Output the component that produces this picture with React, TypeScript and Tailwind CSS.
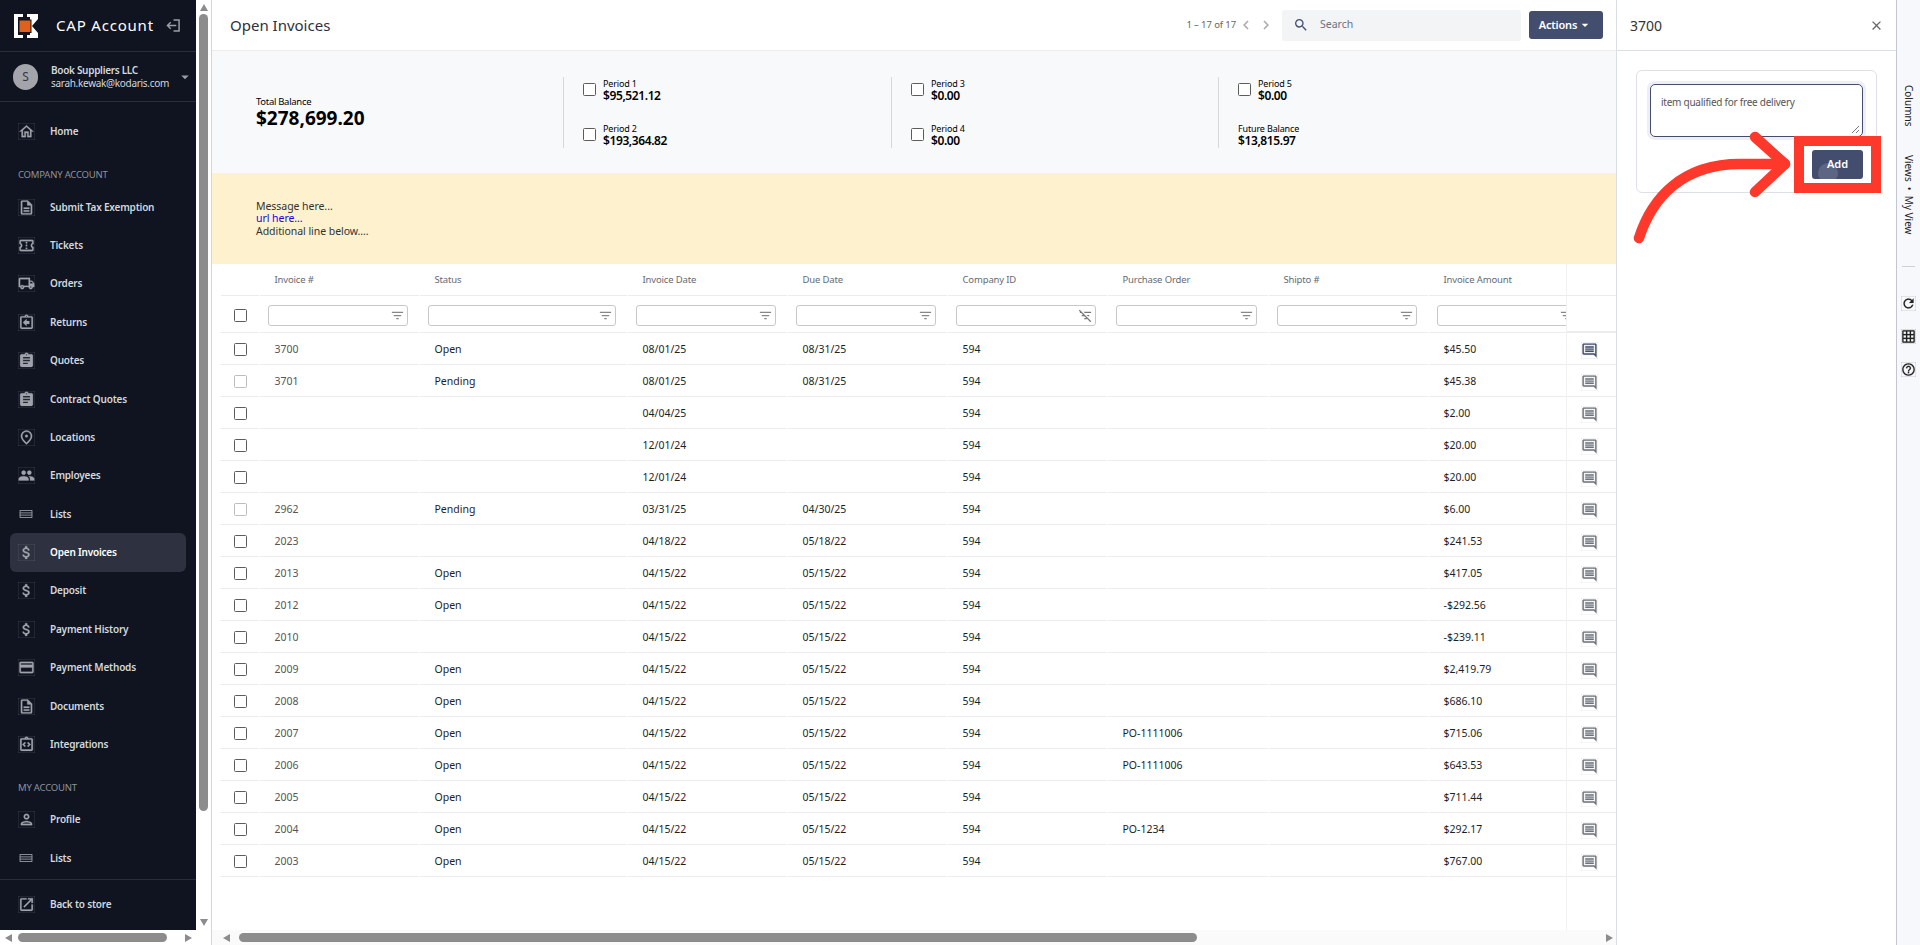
import React from "react";
import {
  MdAssignment,
  MdAttachMoney,
  MdClose,
  MdHelpOutline,
  MdOutlineAssignmentReturn,
  MdOutlineChevronLeft,
  MdOutlineChevronRight,
  MdOutlineComment,
  MdOutlineConfirmationNumber,
  MdOutlineCreditCard,
  MdOutlineDescription,
  MdOutlineHome,
  MdOutlineIntegrationInstructions,
  MdOutlineLocalShipping,
  MdOutlinePerson,
  MdOutlinePlace,
  MdOpenInNew,
  MdPeople,
  MdRefresh,
  MdSearch,
  MdFilterList,
  MdFilterListOff,
  MdArrowDropDown,
  MdOutlineGridOn,
} from "react-icons/md";

const ListsIcon = ({ className }: { className?: string }) => (
  <svg viewBox="0 0 16 10" className={className} fill="none" stroke="currentColor" strokeWidth="1.2">
    <rect x="0.6" y="0.6" width="14.8" height="8.8" />
    <path d="M0 3.6h16M0 6.4h16" />
  </svg>
);

const companyItems = [
  { label: "Submit Tax Exemption", Icon: MdOutlineDescription },
  { label: "Tickets", Icon: MdOutlineConfirmationNumber },
  { label: "Orders", Icon: MdOutlineLocalShipping },
  { label: "Returns", Icon: MdOutlineAssignmentReturn },
  { label: "Quotes", Icon: MdAssignment },
  { label: "Contract Quotes", Icon: MdAssignment },
  { label: "Locations", Icon: MdOutlinePlace },
  { label: "Employees", Icon: MdPeople },
  { label: "Lists", Icon: ListsIcon },
  { label: "Open Invoices", Icon: MdAttachMoney, active: true },
  { label: "Deposit", Icon: MdAttachMoney },
  { label: "Payment History", Icon: MdAttachMoney },
  { label: "Payment Methods", Icon: MdOutlineCreditCard },
  { label: "Documents", Icon: MdOutlineDescription },
  { label: "Integrations", Icon: MdOutlineIntegrationInstructions },
];

const rows = [
  { inv: "3700", status: "Open", date: "08/01/25", due: "08/31/25", po: "", amt: "$45.50", first: true },
  { inv: "3701", status: "Pending", date: "08/01/25", due: "08/31/25", po: "", amt: "$45.38", off: true },
  { inv: "", status: "", date: "04/04/25", due: "", po: "", amt: "$2.00" },
  { inv: "", status: "", date: "12/01/24", due: "", po: "", amt: "$20.00" },
  { inv: "", status: "", date: "12/01/24", due: "", po: "", amt: "$20.00" },
  { inv: "2962", status: "Pending", date: "03/31/25", due: "04/30/25", po: "", amt: "$6.00", off: true },
  { inv: "2023", status: "", date: "04/18/22", due: "05/18/22", po: "", amt: "$241.53" },
  { inv: "2013", status: "Open", date: "04/15/22", due: "05/15/22", po: "", amt: "$417.05" },
  { inv: "2012", status: "Open", date: "04/15/22", due: "05/15/22", po: "", amt: "-$292.56" },
  { inv: "2010", status: "", date: "04/15/22", due: "05/15/22", po: "", amt: "-$239.11" },
  { inv: "2009", status: "Open", date: "04/15/22", due: "05/15/22", po: "", amt: "$2,419.79" },
  { inv: "2008", status: "Open", date: "04/15/22", due: "05/15/22", po: "", amt: "$686.10" },
  { inv: "2007", status: "Open", date: "04/15/22", due: "05/15/22", po: "PO-1111006", amt: "$715.06" },
  { inv: "2006", status: "Open", date: "04/15/22", due: "05/15/22", po: "PO-1111006", amt: "$643.53" },
  { inv: "2005", status: "Open", date: "04/15/22", due: "05/15/22", po: "", amt: "$711.44" },
  { inv: "2004", status: "Open", date: "04/15/22", due: "05/15/22", po: "PO-1234", amt: "$292.17" },
  { inv: "2003", status: "Open", date: "04/15/22", due: "05/15/22", po: "", amt: "$767.00" },
];

const headers = ["Invoice #", "Status", "Invoice Date", "Due Date", "Company ID", "Purchase Order", "Shipto #", "Invoice Amount"];

// checkbox + 8 visible columns + the part that is scrolled out of view
const gridCols = "grid grid-cols-[39px_160px_208px_160px_160px_160px_161px_160px_160px_200px] w-[1368px]";

const NavItem = ({ label, Icon, active }: { label: string; Icon: React.ComponentType<{ className?: string }>; active?: boolean }) => (
  <div
    className={`mx-[10px] flex h-[38.4px] shrink-0 items-center rounded-md pl-[8px] text-[10px] font-semibold tracking-[-0.2px] ${
      active ? "bg-[#2e3240] text-white" : "text-[#d3d7de]"
    }`}
  >
    <span className="flex w-[32px] items-center justify-start">
      <Icon
        className={
          Icon === ListsIcon ? "ml-[1px] h-[8px] w-[14px] text-[#8f929a]" : "h-[17px] w-[17px] text-[#a0a3ab] [stroke-width:0.35]"
        }
      />
    </span>
    <span>{label}</span>
  </div>
);

const Sidebar = () => (
  <div className="flex h-full w-[212px] shrink-0 flex-col border-r border-[#d5d5d5] bg-white">
    <div className="flex min-h-0 flex-1">
      <div className="flex h-full w-[196px] flex-col bg-[#0f1420]">
        <div className="flex h-[52px] shrink-0 items-center border-b border-[#2a2e3a] pl-[13px]">
          <svg viewBox="0 0 25 24" className="h-[24px] w-[25px]">
            <path fill="#fff" d="M1 0h9v3H5v18h5v3H1zM14 0h11v5l-6 7 6 7v5H14v-3h3V3h-3z" />
            <rect x="6" y="6" width="12" height="12.5" fill="#e0601f" stroke="#1a1410" strokeWidth="1" />
          </svg>
          <span className="ml-[18px] text-[15px] tracking-[0.8px] text-white">CAP Account</span>
          <svg viewBox="0 0 16 14" className="ml-[12px] h-[13px] w-[15px]" fill="none" stroke="#9a9da5" strokeWidth="1.6">
            <path d="M8 1h6v12H8M11 7H2M5 3.5 1.5 7 5 10.5" />
          </svg>
        </div>
        <div className="flex h-[50px] shrink-0 items-center border-b border-[#2a2e3a] pl-[13px]">
          <div className="flex h-[26px] w-[25px] items-center justify-center rounded-full bg-[#a3a5ab] text-[12px] text-[#33374a]">S</div>
          <div className="ml-[13px] flex w-[125px] flex-col text-[10px] leading-[12.5px] tracking-[-0.3px] text-[#d3d7de]">
            <span className="font-semibold">Book Suppliers LLC</span>
            <span>sarah.kewak@kodaris.com</span>
          </div>
          <MdArrowDropDown className="h-[18px] w-[18px] text-[#9a9da5]" />
        </div>
        <div className="flex min-h-0 flex-1 flex-col overflow-hidden">
          <div className="pt-[10px]">
            <NavItem label="Home" Icon={MdOutlineHome} />
          </div>
          <div className="ml-[18px] mb-[3.5px] mt-[16px] text-[9.5px] leading-[18px] tracking-[-0.2px] text-[#8f929a]">COMPANY ACCOUNT</div>
          {companyItems.map(i => (
            <NavItem key={i.label} {...i} />
          ))}
          <div className="ml-[18px] mb-[4px] mt-[15px] text-[9.5px] leading-[18px] tracking-[-0.2px] text-[#8f929a]">MY ACCOUNT</div>
          <NavItem label="Profile" Icon={MdOutlinePerson} />
          <NavItem label="Lists" Icon={ListsIcon} />
        </div>
        <div className="flex h-[51px] shrink-0 items-center border-t border-[#2a2e3a]">
          <NavItem label="Back to store" Icon={MdOpenInNew} />
        </div>
      </div>
      <div className="flex w-[15px] flex-col items-center justify-between bg-white py-[4px]">
        <div className="h-0 w-0 border-x-[4.5px] border-b-[7px] border-x-transparent border-b-[#8c8c8c]" />
        <div className="mb-auto mt-[3px] h-[797px] w-[9px] rounded-full bg-[#8c8c8c]" />
        <div className="h-0 w-0 border-x-[4.5px] border-t-[7px] border-x-transparent border-t-[#8c8c8c]" />
      </div>
    </div>
    <div className="flex h-[15px] shrink-0 items-center pl-[5px]">
      <div className="h-0 w-0 border-y-[4.5px] border-r-[7px] border-y-transparent border-r-[#8c8c8c]" />
      <div className="ml-[6px] h-[9px] w-[149px] rounded-full bg-[#8c8c8c]" />
      <div className="ml-[18px] h-0 w-0 border-y-[4.5px] border-l-[7px] border-y-transparent border-l-[#8c8c8c]" />
    </div>
  </div>
);

const Box = ({ light }: { light?: boolean }) => (
  <span className={`block h-[13px] w-[13px] shrink-0 rounded-[1.5px] border bg-white ${light ? "border-[#bdbdbd]" : "border-[#5c5c5c]"}`} />
);

const PeriodCell = ({ label, value, check = true }: { label: string; value: string; check?: boolean }) => (
  <div className="flex h-[26px] items-center">
    {check && (
      <span className="mr-[7px]">
        <Box />
      </span>
    )}
    <div className="flex flex-col text-black">
      <span className="text-[9px] leading-[13px] tracking-[-0.15px]">{label}</span>
      <span className="text-[12px] font-semibold leading-[12px] tracking-[-0.4px]">{value}</span>
    </div>
  </div>
);

const PeriodGroup = ({ children, className }: { children: React.ReactNode; className?: string }) => (
  <div className={`flex h-[71px] flex-col justify-between border-l border-[#d8d8d8] pl-[19px] ${className ?? ""}`}>{children}</div>
);

const FilterBox = ({ off }: { off?: boolean }) => (
  <div className="ml-[8px] mr-[11px] flex h-[21px] items-center justify-end rounded-[3px] border border-[#c8c8c8] bg-white pr-[2px]">
    {off ? <MdFilterListOff className="h-[15px] w-[15px] text-[#777]" /> : <MdFilterList className="h-[15px] w-[15px] text-[#888]" />}
  </div>
);

const InvoiceTable = () => (
  <div className="flex min-h-0 flex-1 bg-white pl-[9px]">
    <div className="min-w-0 flex-1 overflow-hidden">
      <div className={`${gridCols} h-[32px] text-[9.5px] tracking-[-0.15px] text-[#666a72]`}>
        <div className="mr-px border-b border-[#ececec]" />
        {headers.map(h => (
          <div key={h} className="mr-px flex items-center border-b border-[#ececec] pl-[14.5px] pt-[1px]">
            {h}
          </div>
        ))}
        <div className="border-b border-[#ececec]" />
      </div>
      <div className={`${gridCols} h-[37px]`}>
        <div className="mr-px flex items-center border-b border-[#ececec] pl-[13px] pt-[2px]">
          <Box />
        </div>
        {headers.map(h => (
          <div key={h} className="mr-px flex items-center border-b border-[#ececec] pt-[3px]">
            <div className="w-full">
              <FilterBox off={h === "Company ID"} />
            </div>
          </div>
        ))}
        <div className="border-b border-[#ececec]" />
      </div>
      {rows.map((r, i) => (
        <div key={i} className={`${gridCols} h-[32px] text-[10.5px] text-[#1e1e1e]`}>
          <div className="mr-px flex items-center border-b border-[#ececec] pl-[13px] pt-[1px]">
            <Box light={r.off} />
          </div>
          <div className="mr-px flex items-center border-b border-[#ececec] pl-[14.5px] pt-[3px] text-[#555]">{r.inv}</div>
          <div className="mr-px flex items-center border-b border-[#ececec] pl-[14.5px] pt-[3px]">{r.status}</div>
          <div className="mr-px flex items-center border-b border-[#ececec] pl-[14.5px] pt-[3px]">{r.date}</div>
          <div className="mr-px flex items-center border-b border-[#ececec] pl-[14.5px] pt-[3px]">{r.due}</div>
          <div className="mr-px flex items-center border-b border-[#ececec] pl-[14.5px] pt-[3px]">594</div>
          <div className="mr-px flex items-center border-b border-[#ececec] pl-[14.5px] pt-[3px]">{r.po}</div>
          <div className="mr-px border-b border-[#ececec]" />
          <div className="mr-px flex items-center border-b border-[#ececec] pl-[14.5px] pt-[3px]">{r.amt}</div>
          <div className="border-b border-[#ececec]" />
        </div>
      ))}
    </div>
    <div className="w-[50px] shrink-0 border-l border-[#f1f1f1]">
      <div className="h-[32px] border-b border-[#ececec]" />
      <div className="h-[37px] border-b-2 border-[#ececec]" />
      {rows.map((r, i) => (
        <div key={i} className="flex h-[32px] items-center border-b border-[#ececec] pl-[14px] pt-[3px]">
          <MdOutlineComment className={`h-[17px] w-[17px] [stroke-width:0.2] ${r.first ? "text-[#434e6e]" : "text-[#70737c]"}`} />
        </div>
      ))}
    </div>
  </div>
);

const MainPanel = () => (
  <div className="flex h-full min-w-0 flex-1 flex-col">
    <div className="flex h-[51px] shrink-0 items-center border-b border-[#ececec] bg-white pl-[18px] pr-[13px]">
      <span className="text-[15px] text-[#2c3140]">Open Invoices</span>
      <span className="ml-auto text-[9.5px] tracking-[-0.1px] text-[#666]">1 – 17 of 17</span>
      <MdOutlineChevronLeft className="ml-[1px] h-[18px] w-[18px] text-[#aaa]" />
      <MdOutlineChevronRight className="ml-[2px] h-[18px] w-[18px] text-[#aaa]" />
      <div className="ml-[7px] flex h-[31px] w-[239px] items-center rounded-[3px] bg-[#f3f4f6] pl-[11px] text-[10.5px] text-[#6b7280]">
        <MdSearch className="h-[16px] w-[16px] text-[#434e6e]" />
        <span className="ml-[11px]">Search</span>
      </div>
      <div className="ml-[8px] flex h-[28px] w-[74px] items-center justify-center rounded-[3px] bg-[#434e6e] text-[11px] font-semibold tracking-[-0.2px] text-white">
        Actions
        <MdArrowDropDown className="h-[16px] w-[16px]" />
      </div>
    </div>
    <div className="flex h-[122px] shrink-0 items-center bg-[#f8f9fb] pl-[44px]">
      <div className="flex w-[307px] flex-col pt-[1px] text-black">
        <span className="text-[9.5px] leading-[12px] tracking-[-0.3px]">Total Balance</span>
        <span className="text-[19px] font-bold leading-[21px]">$278,699.20</span>
      </div>
      <PeriodGroup className="w-[328px]">
        <PeriodCell label="Period 1" value="$95,521.12" />
        <PeriodCell label="Period 2" value="$193,364.82" />
      </PeriodGroup>
      <PeriodGroup className="w-[327px]">
        <PeriodCell label="Period 3" value="$0.00" />
        <PeriodCell label="Period 4" value="$0.00" />
      </PeriodGroup>
      <PeriodGroup>
        <PeriodCell label="Period 5" value="$0.00" />
        <PeriodCell label="Future Balance" value="$13,815.97" check={false} />
      </PeriodGroup>
    </div>
    <div className="flex h-[91px] shrink-0 flex-col justify-center bg-[#fef1cd] pl-[44px] text-[10.5px] leading-[12.5px] tracking-[-0.05px] text-[#333]">
      <span>Message here...</span>
      <span className="text-[#2200ee]">url here...</span>
      <span>Additional line below....</span>
    </div>
    <InvoiceTable />
    <div className="flex h-[15px] shrink-0 items-center bg-[#fafafa] pl-[11px] pr-[3px]">
      <div className="h-0 w-0 border-y-[4.5px] border-r-[7px] border-y-transparent border-r-[#8c8c8c]" />
      <div className="ml-[9px] h-[9px] w-[958px] rounded-full bg-[#8c8c8c]" />
      <div className="ml-auto h-0 w-0 border-y-[4.5px] border-l-[7px] border-y-transparent border-l-[#8c8c8c]" />
    </div>
  </div>
);

const NotePanel = () => (
  <div className="flex h-full w-[280px] shrink-0 flex-col border-l border-[#dcdee6] bg-white">
    <div className="flex h-[51px] shrink-0 items-center justify-between border-b border-[#dcdee6] pl-[13px] pr-[12px]">
      <span className="text-[14px] text-[#333]">3700</span>
      <MdClose className="h-[15px] w-[15px] text-[#666]" />
    </div>
    <div className="ml-[19px] mr-[19px] mt-[19px] h-[123px] rounded-md border border-[#dde0e6] px-[13px] pt-[13px]">
      <div className="relative h-[53px] rounded-[5px] border border-[#434e6e] pl-[10px] pt-[10px] text-[10px] leading-[14px] tracking-[-0.25px] text-[#555] shadow-[0_0_0_3px_#eeeff5]">
        item qualified for free delivery
        <svg viewBox="0 0 8 8" className="absolute bottom-[3px] right-[3px] h-[8px] w-[8px]" stroke="#555" strokeWidth="0.8">
          <path d="M1 8 8 1M5 8l3-3" />
        </svg>
      </div>
      <div className="mt-[13px] flex justify-end">
        <div className="relative flex h-[29px] w-[51px] items-center justify-center overflow-hidden rounded-[3px] bg-[#434e6e] text-[11px] font-semibold text-white">
          <span className="absolute left-[6px] top-[13px] h-[20px] w-[20px] rounded-full bg-[#5c6683]" />
          <span className="relative">Add</span>
        </div>
      </div>
    </div>
  </div>
);

const SideRail = () => (
  <div className="flex h-full w-[24px] shrink-0 flex-col items-center border-l border-[#c3c6d2] bg-[#f7f8fb] text-[10px] text-[#222]">
    <span className="mt-[85px] [writing-mode:vertical-rl]">Columns</span>
    <span className="mt-[29px] [writing-mode:vertical-rl]">Views&nbsp; •&nbsp; My View</span>
    <div className="mt-[31px] h-[1px] w-[13px] bg-[#cfd1d8]" />
    <MdRefresh className="mt-[29px] h-[15px] w-[15px] text-[#222] [stroke-width:0.3]" />
    <MdOutlineGridOn className="mt-[18px] h-[15px] w-[15px] text-[#222] [stroke-width:0.3]" />
    <MdHelpOutline className="mt-[18px] h-[15px] w-[15px] text-[#222] [stroke-width:0.3]" />
  </div>
);

export default function App() {
  return (
    <div className="relative flex h-[945px] w-[1920px] overflow-hidden bg-white font-['Noto_Sans',sans-serif]">
      <Sidebar />
      <MainPanel />
      <NotePanel />
      <SideRail />
      <svg viewBox="0 0 1920 945" className="pointer-events-none absolute inset-0 h-[945px] w-[1920px]" fill="none" stroke="#fe392c">
        <rect x="1799" y="141" width="77" height="47" strokeWidth="10" />
        <path d="M1639 238C1652 198 1682 164 1740 164H1785" strokeWidth="10.5" strokeLinecap="round" />
        <path d="M1755 137 1785 164 1755 192" strokeWidth="10.5" strokeLinecap="round" strokeLinejoin="round" />
      </svg>
    </div>
  );
}
